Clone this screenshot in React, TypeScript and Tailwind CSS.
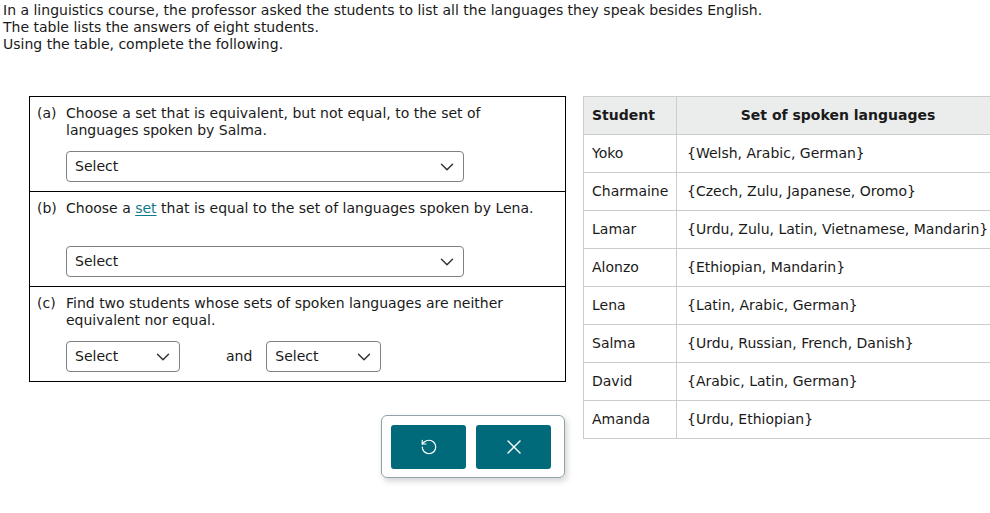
import { RotateCcw, X, ChevronDown } from 'lucide-react';

const rows: [string, string][] = [
  ['Yoko', '{Welsh, Arabic, German}'],
  ['Charmaine', '{Czech, Zulu, Japanese, Oromo}'],
  ['Lamar', '{Urdu, Zulu, Latin, Vietnamese, Mandarin}'],
  ['Alonzo', '{Ethiopian, Mandarin}'],
  ['Lena', '{Latin, Arabic, German}'],
  ['Salma', '{Urdu, Russian, French, Danish}'],
  ['David', '{Arabic, Latin, German}'],
  ['Amanda', '{Urdu, Ethiopian}'],
];

function SelectBox({ width }: { width: string }) {
  return (
    <div
      className={`${width} h-[31px] flex items-center justify-between pl-[8px] pr-[5px] border border-[#7d8384] rounded-[4px] bg-white`}
    >
      <span>Select</span>
      <ChevronDown size={22} strokeWidth={1.6} className="text-[#333]" />
    </div>
  );
}

function Part({
  label,
  first,
  children,
  control,
}: {
  label: string;
  first?: boolean;
  children: React.ReactNode;
  control: React.ReactNode;
}) {
  return (
    <div
      className={`${first ? 'h-[94px]' : 'h-[95px] border-t border-black'} pt-[8px] pl-[7px] pr-[8px] flex flex-col`}
    >
      <div className="flex min-h-[34px]">
        <span className="w-[29px] shrink-0">{label}</span>
        <div className="flex-1">{children}</div>
      </div>
      <div className="pl-[29px] mt-[12px]">{control}</div>
    </div>
  );
}

export default function App() {
  return (
    <div
      className="w-[990px] h-[513px] overflow-hidden bg-white text-[14px] leading-[17px] text-[#1a1a1a]"
      style={{ fontFamily: '"DejaVu Sans", Verdana, sans-serif' }}
    >
      <div className="pl-[3px] pt-[2px]">
        <p>In a linguistics course, the professor asked the students to list all the languages they speak besides English.</p>
        <p>The table lists the answers of eight students.</p>
        <p>Using the table, complete the following.</p>
      </div>

      <div className="flex items-start mt-[43px] ml-[29px]">
        {/* Questions */}
        <div className="w-[537px] shrink-0 flex flex-col">
          <div className="border border-black">
            <Part first label="(a)" control={<SelectBox width="w-[398px]" />}>
              Choose a set that is equivalent, but not equal, to the set of languages spoken by Salma.
            </Part>
            <Part label="(b)" control={<SelectBox width="w-[398px]" />}>
              Choose a{' '}
              <span className="text-[#0f7a8a] underline underline-offset-2">set</span> that is equal to the set of languages spoken by Lena.
            </Part>
            <Part
              label="(c)"
              control={
                <div className="flex items-center">
                  <SelectBox width="w-[114px]" />
                  <span className="ml-[46px] mr-[14px]">and</span>
                  <SelectBox width="w-[115px]" />
                </div>
              }
            >
              Find two students whose sets of spoken languages are neither equivalent nor equal.
            </Part>
          </div>

          <div className="self-end mr-[1px] mt-[33px] w-[184px] h-[63px] border border-[#8fa3a8] rounded-[6px] shadow-[2px_3px_6px_rgba(0,0,0,0.18)] flex items-center pl-[9px] gap-[10px]">
            <button className="w-[75px] h-[44px] rounded-[3px] bg-[#00697a] text-white flex items-center justify-center">
              <RotateCcw size={18} strokeWidth={1.6} />
            </button>
            <button className="w-[75px] h-[44px] rounded-[3px] bg-[#00697a] text-white flex items-center justify-center">
              <X size={24} strokeWidth={1.4} />
            </button>
          </div>
        </div>

        {/* Table */}
        <table className="ml-[17px] shrink-0 border-collapse w-[417px] border border-[#cccccc]">
          <thead>
            <tr className="bg-[#ebeded] h-[38px]">
              <th className="w-[93px] text-left font-bold pl-[8px] border border-[#cccccc]">Student</th>
              <th className="text-center font-bold border border-[#cccccc]">Set of spoken languages</th>
            </tr>
          </thead>
          <tbody>
            {rows.map(([name, langs]) => (
              <tr key={name} className="h-[38px]">
                <td className="pl-[8px] border border-[#cccccc] whitespace-nowrap">{name}</td>
                <td className="pl-[10px] border border-[#cccccc] whitespace-nowrap">{langs}</td>
              </tr>
            ))}
          </tbody>
        </table>
      </div>
    </div>
  );
}
